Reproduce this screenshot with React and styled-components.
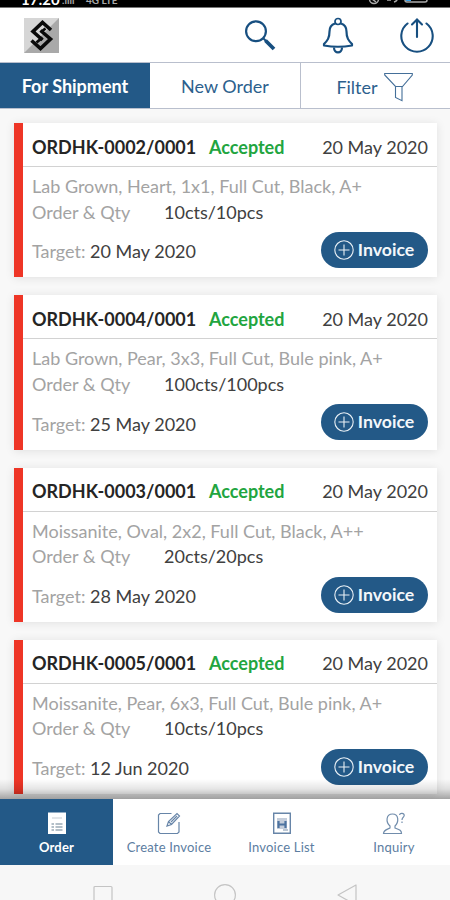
import React from 'react';
import styled, { createGlobalStyle } from 'styled-components';

const blue = '#235987';
const ink = '#174f80';

const GlobalStyle = createGlobalStyle`
  * { box-sizing: border-box; }
  body { margin: 0; overflow: hidden; font-family: Lato, "Open Sans", sans-serif; }
  svg { display: block; flex: none; }
`;

const Screen = styled.div`
  width: 450px;
  height: 900px;
  display: flex;
  flex-direction: column;
  overflow: hidden;
  background: #f8f8f8;
`;

const StatusBar = styled.div`
  height: 8px;
  flex: none;
  display: flex;
  align-items: flex-end;
  justify-content: space-between;
  padding: 0 21px;
  overflow: hidden;
  background: #000;
  border-bottom: 1px solid #777;
`;

const StatusGroup = styled.div`
  display: flex;
  align-items: flex-end;
  height: 17px;
`;

const Clock = styled.span`
  width: 41px;
  font: 700 15px/16px Lato, sans-serif;
  color: #fff;
`;

const Network = styled.span`
  width: ${(p) => p.$width}px;
  font: 700 10px/13px Lato, sans-serif;
  color: #aaa;
  white-space: nowrap;
`;

const Header = styled.header`
  height: 54px;
  flex: none;
  display: flex;
  align-items: center;
  justify-content: space-between;
  padding: 0 16px 0 24px;
  background: #fff;
`;

const Actions = styled.div`
  display: flex;
  align-items: center;
  gap: 46px;
`;

const Tabs = styled.nav`
  height: 47px;
  flex: none;
  display: grid;
  grid-template-columns: repeat(3, 1fr);
  border: solid #b9bfcd;
  border-width: 1px 0;
  background: #fff;
`;

const Tab = styled.button`
  display: flex;
  align-items: center;
  justify-content: center;
  gap: 6px;
  padding: ${(p) => (p.$divided ? '2px 2px 0 0' : '0')};
  border: 0;
  border-left: ${(p) => (p.$divided ? '1px solid #b9bfcd' : '0')};
  background: ${(p) => (p.$active ? blue : '#fff')};
  color: ${(p) => (p.$active ? '#fff' : '#2c5f8d')};
  font: ${(p) => (p.$active ? 700 : 400)} 18px/22px Lato, sans-serif;
`;

const List = styled.main`
  flex: 1;
  min-height: 0;
  display: flex;
  flex-direction: column;
  gap: 18px;
  padding: 14px 13px 0 14px;
  overflow: hidden;
  position: relative;
`;

const NavShade = styled.div`
  position: absolute;
  left: 0;
  right: 0;
  bottom: 0;
  height: 20px;
  background: linear-gradient(rgba(0, 0, 0, 0), rgba(0, 0, 0, 0.1) 50%, rgba(0, 0, 0, 0.34));
`;

const Card = styled.article`
  height: 154.3px;
  flex: none;
  border-left: 9px solid #ee3526;
  background: #fff;
  box-shadow: 0 1px 9px rgba(0, 0, 0, 0.1);
`;

const CardHead = styled.div`
  height: 44px;
  display: flex;
  align-items: center;
  padding: 4px 9px 0 9px;
  border-bottom: 1px solid #d2d2d2;
  font-size: 18px;
  line-height: 22px;
`;

const OrderNo = styled.span`
  width: 177px;
  font-weight: 700;
  color: #252525;
  white-space: nowrap;
`;

const Status = styled.span`
  flex: 1;
  font-weight: 700;
  color: #22a53f;
`;

const OrderDate = styled.span`
  color: #404040;
`;

const CardBody = styled.div`
  padding: 7px 9px 0 9px;
  font-size: 18px;
  line-height: 25.6px;
  color: #a3a3a3;
`;

const Description = styled.div`
  white-space: nowrap;
`;

const Quantity = styled.div`
  display: grid;
  grid-template-columns: 132px 1fr;
`;

const Dark = styled.span`
  color: #404040;
`;

const CardFoot = styled.div`
  display: flex;
  align-items: center;
  justify-content: space-between;
  height: 36px;
  margin-top: 7px;
`;

const Target = styled.span`
  padding-top: 4px;
`;

const InvoiceButton = styled.button`
  width: 107px;
  height: 36px;
  display: flex;
  align-items: center;
  justify-content: center;
  gap: 4px;
  padding: 0 1px 0 0;
  border: 0;
  border-radius: 18px;
  background: ${blue};
  color: #f3f7fa;
  font: 700 17.7px/22px Lato, sans-serif;
`;

const BottomNav = styled.nav`
  height: 66px;
  flex: none;
  display: grid;
  grid-template-columns: 113px 112px 113px 112px;
  background: #fff;
`;

const NavItem = styled.button`
  display: flex;
  flex-direction: column;
  align-items: center;
  gap: 3px;
  padding: 13px 0 0;
  border: 0;
  background: ${(p) => (p.$active ? blue : '#fff')};
  color: ${(p) => (p.$active ? '#fff' : '#5c7da1')};
  font: ${(p) => (p.$active ? 700 : 400)} 13px/18px Lato, sans-serif;
  letter-spacing: 0.2px;
`;

const SystemBar = styled.footer`
  height: 35px;
  flex: none;
  display: flex;
  gap: 101px;
  padding: 19px 0 0 93px;
  overflow: hidden;
  background: #f7f7f7;
`;

const Logo = () => (
  <svg width="35" height="35" viewBox="0 0 35 35">
    <path d="M0 0H35V35H0Z" fill="#d6d6d6" />
    <path d="M35 0V35H0Z" fill="#a9a9a9" />
    <g fill="none" stroke="#0a0a0a" strokeWidth="3.6">
      <path d="M27 12L18.500 4.500L9 13.500L18.500 22" />
      <path d="M7.500 22.500L16.500 30.500L26.500 21L16.500 12.500" />
      <path d="M21.500 10.500L17 14M12.500 24.500L18.500 19.500" strokeWidth="2.800" />
    </g>
  </svg>
);

const SearchIcon = () => (
  <svg width="32" height="34" viewBox="0 0 32 34" fill="none" stroke={ink}>
    <circle cx="12" cy="13.200" r="9.900" strokeWidth="2.200" />
    <path d="M19.500 20.500L22 23" strokeWidth="2" />
    <path d="M21.500 22.500L30 31" strokeWidth="3.800" />
  </svg>
);

const BellIcon = () => (
  <svg width="32" height="37" viewBox="0 0 32 37" fill="none" stroke={ink} strokeWidth="2.200" strokeLinejoin="round">
    <path d="M13 6.500C10 7.500 7.500 10 7.500 14.500C7.500 21 5.500 23.500 2 27V28.500Q16 31 30 28.500V27C26.500 23.500 24.500 21 24.500 14.500C24.500 10 22 7.500 19 6.500" />
    <circle cx="16" cy="4.500" r="3" strokeWidth="1.700" />
    <path d="M12 30.500C12 37 20 37 20 30.500" />
  </svg>
);

const ExitIcon = () => (
  <svg width="34" height="35" viewBox="0 0 34 35" fill="none" stroke={ink} strokeWidth="2.100" strokeLinecap="round">
    <path d="M7.500 5.500A15.700 15.700 0 1 0 26.500 5.500" />
    <path d="M17 19V2M12 6.500L17 1.500L22 6.500" />
  </svg>
);

const FilterIcon = () => (
  <svg width="29" height="30" viewBox="0 0 29 30" fill="none" stroke="#446f99" strokeWidth="1.100">
    <path d="M.7 1.500H28.300V3L18.500 14.500H11.500L.7 3Z" />
    <path d="M11.500 14.500V25.500L18 28.700V14.500" />
  </svg>
);

const PlusCircle = () => (
  <svg width="20" height="20" viewBox="0 0 20 20" fill="none" stroke="#e9f0f5" strokeWidth="1.100">
    <circle cx="10" cy="10" r="9.200" />
    <path d="M10 4.500V15.500M4.500 10H15.500" />
  </svg>
);

const OrderIcon = () => (
  <svg width="24" height="23" viewBox="0 0 24 23">
    <path d="M3 .5H21V22H3Z" fill="#fff" />
    <path d="M7 6H17" stroke="#d0d5da" strokeWidth="1.200" />
    <path d="M6.500 12H9M10.500 12H17.500M6.500 15H9M10.500 15H17.500M6.500 18H9M10.500 18H17.500" stroke="#9babb7" strokeWidth="1.300" />
  </svg>
);

const CreateIcon = () => (
  <svg width="24" height="23" viewBox="0 0 24 23" fill="none" stroke="#6785a8" strokeWidth="1.200">
    <path d="M14.500 1.500H3L1.500 3V20L3 21.500H20.500L22 20V10" />
    <path d="M10 14L11.500 9.500L20 1.500L22.500 4L14.500 12.500ZM11.500 9.500L14.500 12.500M14 10L20 4" />
  </svg>
);

const InvoiceListIcon = () => (
  <svg width="24" height="23" viewBox="0 0 24 23" fill="none">
    <path d="M3.700 1.200H20.300V21.300H3.700Z" stroke="#6785a8" strokeWidth="1.400" />
    <path d="M7 6H17V17H7Z" fill="#c5cedb" />
    <path d="M8.500 9V16M15.500 9V16M8.500 12.500H15.500" stroke="#4d73a0" strokeWidth="2.200" />
    <path d="M13 18H18" stroke="#a5b4c6" strokeWidth="1.500" />
  </svg>
);

const InquiryIcon = () => (
  <svg width="24" height="23" viewBox="0 0 24 23" fill="none" stroke="#718dac" strokeWidth="1.200">
    <path d="M8 14C3.500 10 4 2 10.500 2S17 10 13 14V16C17 17.500 19.500 18 19.500 21.500H1.500C1.500 18 5 17.500 8 16Z" />
    <path d="M17.500 3C18 .5 22.500 1 22.200 3.500C22 5.500 20 5 20 8M20 9.500V11" />
  </svg>
);

const orders = [
  { no: '0002', text: 'Lab Grown, Heart, 1x1, Full Cut, Black, A+', qty: '10cts/10pcs', target: '20 May 2020' },
  { no: '0004', text: 'Lab Grown, Pear, 3x3, Full Cut, Bule pink, A+', qty: '100cts/100pcs', target: '25 May 2020' },
  { no: '0003', text: 'Moissanite, Oval, 2x2, Full Cut, Black, A++', qty: '20cts/20pcs', target: '28 May 2020' },
  { no: '0005', text: 'Moissanite, Pear, 6x3, Full Cut, Bule pink, A+', qty: '10cts/10pcs', target: '12 Jun 2020' },
];

const OrderCard = ({ order }) => (
  <Card>
    <CardHead>
      <OrderNo>ORDHK-{order.no}/0001</OrderNo>
      <Status>Accepted</Status>
      <OrderDate>20 May 2020</OrderDate>
    </CardHead>
    <CardBody>
      <Description>{order.text}</Description>
      <Quantity>
        <span>Order &amp; Qty</span>
        <Dark>{order.qty}</Dark>
      </Quantity>
      <CardFoot>
        <Target>Target: <Dark>{order.target}</Dark></Target>
        <InvoiceButton><PlusCircle />Invoice</InvoiceButton>
      </CardFoot>
    </CardBody>
  </Card>
);

export default function App() {
  return (
    <Screen>
      <GlobalStyle />
      <StatusBar>
        <StatusGroup>
          <Clock>17:20</Clock>
          <Network $width={24}>.ııll</Network>
          <Network $width={30}>4G LTE</Network>
        </StatusGroup>
        <svg width="62" height="8" viewBox="0 0 62 8" fill="none" stroke="#aaa" strokeWidth="1.500">
          <circle cx="7" cy="0" r="4.500" />
          <path d="M5 0L9 3M20 1H24M27 3Q31 2 30-2" />
          <path d="M38-3V1Q38 3 40 3H58Q60 3 60 1V-3" />
          <path d="M39-3H44V2H39Z" fill="#3aa5ef" stroke="none" />
        </svg>
      </StatusBar>
      <Header>
        <Logo />
        <Actions>
          <SearchIcon />
          <BellIcon />
          <ExitIcon />
        </Actions>
      </Header>
      <Tabs>
        <Tab $active>For Shipment</Tab>
        <Tab>New Order</Tab>
        <Tab $divided>Filter<FilterIcon /></Tab>
      </Tabs>
      <List>
        {orders.map((order) => <OrderCard key={order.no} order={order} />)}
        <NavShade />
      </List>
      <BottomNav>
        <NavItem $active><OrderIcon />Order</NavItem>
        <NavItem><CreateIcon />Create Invoice</NavItem>
        <NavItem><InvoiceListIcon />Invoice List</NavItem>
        <NavItem><InquiryIcon />Inquiry</NavItem>
      </BottomNav>
      <SystemBar>
        <svg width="20" height="20" viewBox="0 0 20 20" fill="none" stroke="#c4c4c4" strokeWidth="1.200"><rect x="1" y="2.500" width="18" height="19" rx="1" /></svg>
        <svg width="22" height="22" viewBox="0 0 22 22" fill="none" stroke="#c4c4c4" strokeWidth="1.200"><circle cx="11" cy="11" r="10.400" /></svg>
        <svg width="20" height="22" viewBox="0 0 20 22" fill="none" stroke="#c4c4c4" strokeWidth="1.200"><path d="M19 1V21L1 11Z" strokeLinejoin="round" /></svg>
      </SystemBar>
    </Screen>
  );
}
